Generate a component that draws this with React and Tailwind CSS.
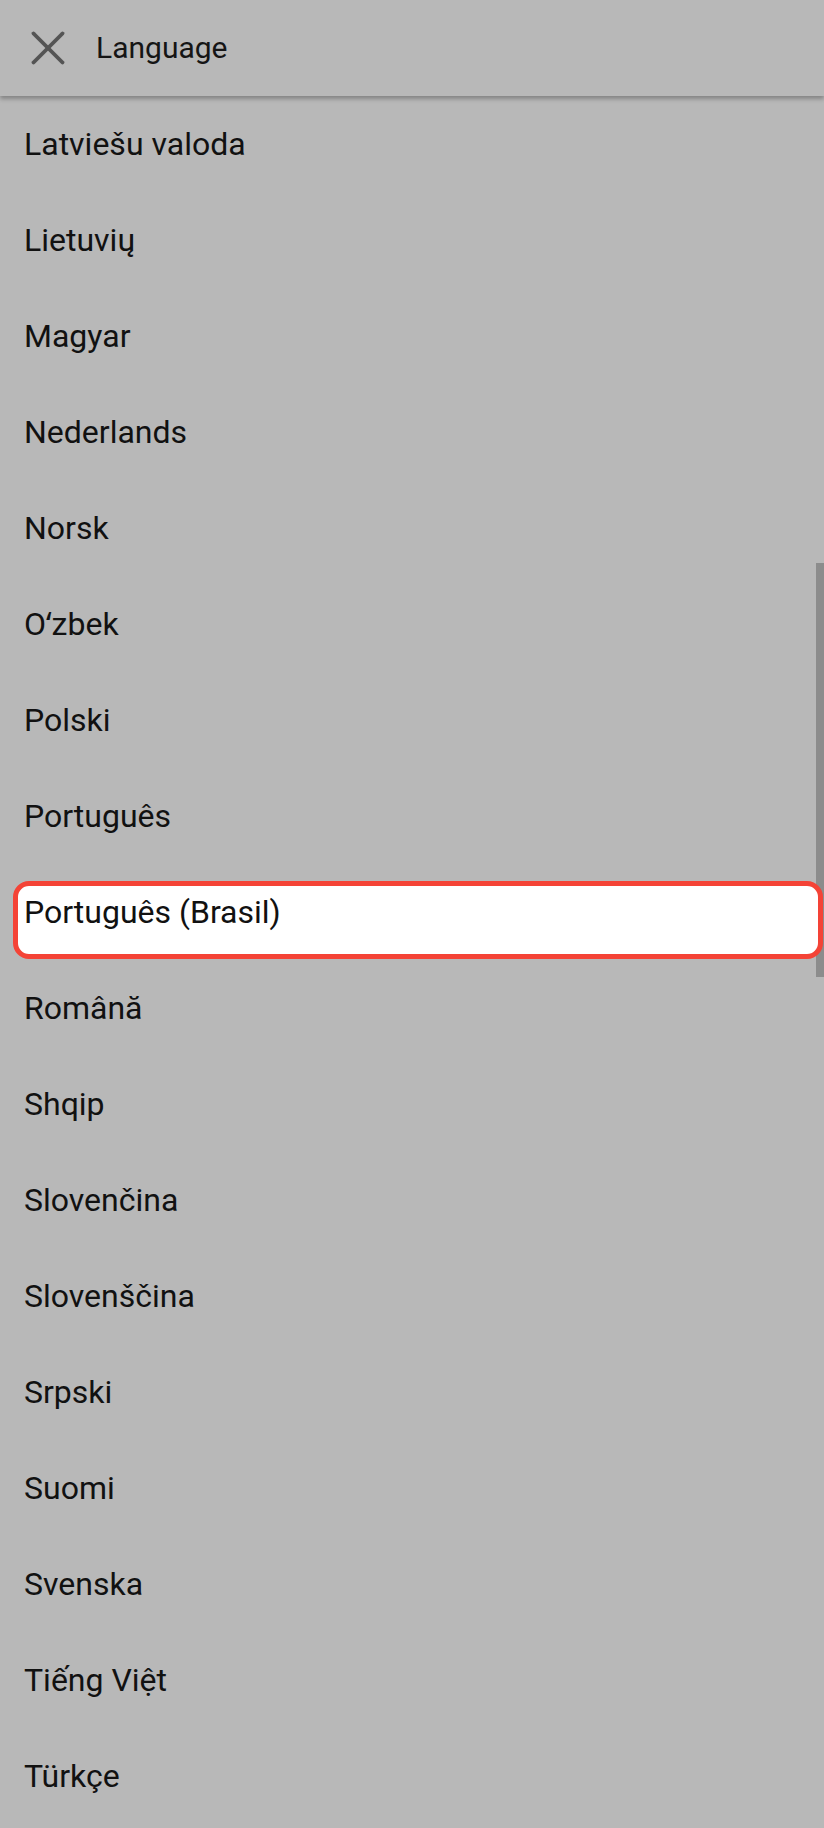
import { X } from "lucide-react";

const languages = [
  "Latviešu valoda",
  "Lietuvių",
  "Magyar",
  "Nederlands",
  "Norsk",
  "Oʻzbek",
  "Polski",
  "Português",
  "Português (Brasil)",
  "Română",
  "Shqip",
  "Slovenčina",
  "Slovenščina",
  "Srpski",
  "Suomi",
  "Svenska",
  "Tiếng Việt",
  "Türkçe",
];

const selected = "Português (Brasil)";

const LanguageRow = ({ name }) => {
  if (name === selected) {
    return (
      <div className="relative z-10 h-[96px] shrink-0 flex items-end pb-px pl-[13px] pr-px">
        <div className="w-full h-[78px] bg-white border-[5px] border-[#f44336] rounded-[16px] pl-[6px] pt-[10px]">
          <span className="block leading-none text-[32px] text-[#111111]">
            {name}
          </span>
        </div>
      </div>
    );
  }

  return (
    <div className="h-[96px] shrink-0 flex items-center px-[24px]">
      <span className="text-[32px] leading-none text-[#111111]">{name}</span>
    </div>
  );
};

const App = () => {
  return (
    <div
      className="relative w-[824px] h-[1828px] overflow-hidden bg-[#b8b8b8]"
      style={{ fontFamily: "Roboto, 'Noto Sans', sans-serif" }}
    >
      <div className="relative z-20 h-[96px] flex items-center bg-[#b8b8b8] shadow-[0_3px_4px_rgba(0,0,0,0.28)]">
        <div className="w-[96px] h-[96px] flex items-center justify-center">
          <X size={58} strokeWidth={1.6} className="text-[#545454]" />
        </div>
        <span className="text-[30px] leading-none text-[#151515]">Language</span>
      </div>

      <div className="flex flex-col">
        {languages.map((lang) => (
          <LanguageRow key={lang} name={lang} />
        ))}
      </div>

      <div className="absolute right-0 top-[563px] w-[8px] h-[414px] bg-[#8c8c8c]" />
    </div>
  );
};

export default App;
